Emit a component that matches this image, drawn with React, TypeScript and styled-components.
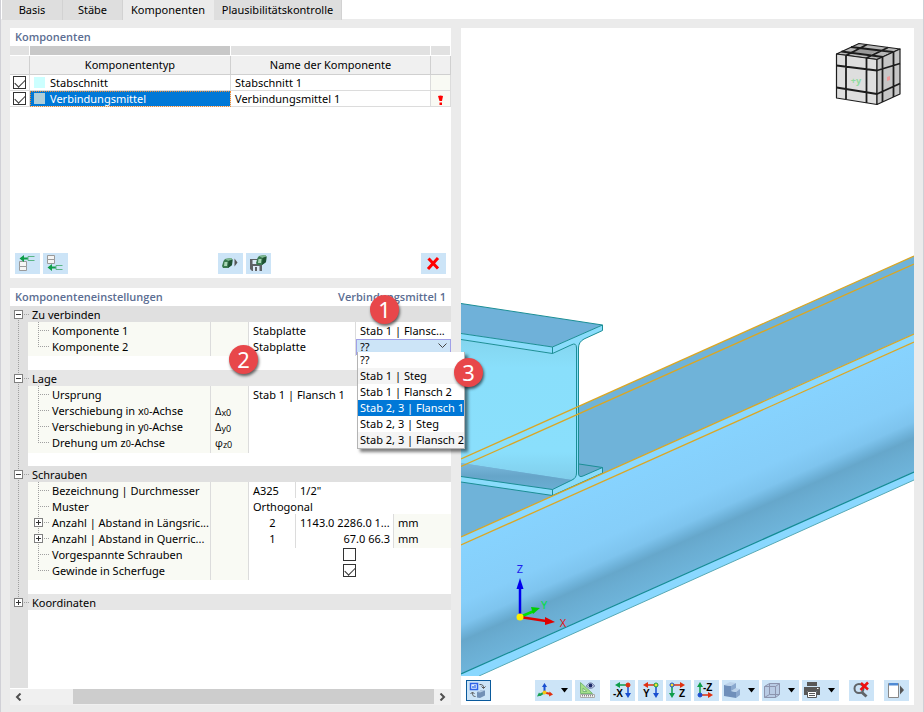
import React, { useState } from "react";
import styled, { createGlobalStyle } from "styled-components";

const GlobalStyle = createGlobalStyle`
  * { box-sizing: border-box; }
  body { margin: 0; background: #ebebeb; }
  body, button, select, input {
    font-family: "Noto Sans", "Open Sans", sans-serif;
    font-size: 11px;
    line-height: 16px;
    color: #000;
  }
`;

const dotsDown = "repeating-linear-gradient(180deg, #a0a0a0 0 1px, transparent 1px 2px)";
const dotsAcross = "repeating-linear-gradient(90deg, #a0a0a0 0 1px, transparent 1px 2px)";

const Window = styled.div`
  min-height: 100vh;
  display: flex;
  flex-direction: column;
  border-left: 1px solid #d0d0d6;
  border-right: 1px solid #d0d0d6;
  background: #ebebeb;
`;

const TabStrip = styled.nav`
  display: flex;
  height: 19px;
  background: #fff;
  padding-left: 1px;
`;

const Tab = styled.button<{ $active?: boolean; $wide: number }>`
  flex: 0 0 ${(p) => p.$wide}px;
  height: 20px;
  padding: 0;
  border: 0;
  border-right: 1px solid ${(p) => (p.$active ? "#ebebeb" : "#d2d2d2")};
  background: ${(p) => (p.$active ? "#ebebeb" : "#dedede")};
  white-space: nowrap;
`;

const Workspace = styled.main`
  flex: 1;
  display: grid;
  grid-template-columns: minmax(0, 441px) minmax(0, 1fr);
  grid-template-rows: minmax(250px, auto) 1fr;
  gap: 10px;
  padding: 9px 9px 7px;
`;

const Panel = styled.section`
  position: relative;
  display: flex;
  flex-direction: column;
  background: #fff;
`;

const PanelHead = styled.header`
  display: flex;
  justify-content: space-between;
  height: 18px;
  padding: 1px 5px;
`;

const PanelTitle = styled.h2`
  margin: 0;
  font-family: "Open Sans", sans-serif;
  font-size: 11px;
  line-height: 16px;
  font-weight: 600;
  color: #5b6d92;
`;

const Grid = styled.table`
  width: 100%;
  table-layout: fixed;
  border-collapse: separate;
  border-spacing: 0;
`;

const StripCell = styled.td<{ $dark?: boolean }>`
  height: 10px;
  padding: 0;
  background: ${(p) => (p.$dark ? "#c8c8c8" : "#e1e1e1")};
  border-right: 1px solid #fff;
  border-bottom: 1px solid #fff;
`;

const HeadCell = styled.th`
  height: 19px;
  padding: 0;
  font-weight: 400;
  background: #f0f0f0;
  border-right: 1px solid #d0d0d0;
  border-bottom: 1px solid #d0d0d0;
`;

const Cell = styled.td<{ $selected?: boolean; $pale?: boolean }>`
  height: 16px;
  padding: 0 0 0 4px;
  line-height: 15px;
  white-space: nowrap;
  background: ${(p) => (p.$selected ? "#0078d7" : p.$pale ? "#f9faf4" : "#fff")};
  color: ${(p) => (p.$selected ? "#fff" : "#000")};
  outline: ${(p) => (p.$selected ? "1px dotted #f08a30" : "none")};
  outline-offset: -1px;
  border-right: 1px solid #dcdcdc;
  border-bottom: 1px solid #dcdcdc;
`;

const CheckCell = styled(Cell)`
  padding: 0 0 0 3px;
`;

const Swatched = styled.span`
  display: flex;
  align-items: center;
  gap: 5px;
`;

const Swatch = styled.span<{ $tone: string }>`
  width: 11px;
  height: 11px;
  background: ${(p) => p.$tone};
`;

const Tick = styled.input.attrs({ type: "checkbox" })`
  appearance: none;
  display: block;
  width: 13px;
  height: 13px;
  margin: 0;
  border: 1px solid #333;
  background: #fff;
  &:checked::before {
    content: "";
    display: block;
    width: 9px;
    height: 5px;
    margin: 2px 0 0 1px;
    border-left: 1px solid #333;
    border-bottom: 1px solid #333;
    transform: rotate(-45deg);
  }
`;

const Tools = styled.div`
  margin-top: auto;
  padding: 4px 5px;
  display: flex;
  justify-content: space-between;
`;

const ToolGroup = styled.div`
  display: flex;
  gap: 3px;
`;

const Tool = styled.button<{ $drop?: boolean; $framed?: boolean }>`
  flex: 0 0 auto;
  display: flex;
  align-items: center;
  width: ${(p) => (p.$drop ? 37 : 25)}px;
  height: 21px;
  padding: 0;
  border: 0;
  background: #cce4f7;
  box-shadow: ${(p) => (p.$framed ? "inset 0 0 0 1px #0a5a9c" : "none")};
  svg { display: block; flex: 0 0 auto; }
`;

const Tree = styled.div`
  flex: 1;
  display: flex;
  flex-direction: column;
  line-height: 18px;
`;

const GroupRow = styled.div<{ $light?: boolean }>`
  display: flex;
  height: 16px;
  background: ${(p) => (p.$light ? "#e6e6e6" : "#e0e0e0")};
`;

const Gutter = styled.span<{ $line?: "full" | "top" | "bottom" | "none" }>`
  flex: 0 0 18px;
  display: flex;
  padding: 4px 0 0 4px;
  background-color: #e0e0e0;
  background-image: ${(p) => (p.$line === "none" ? "none" : dotsDown)};
  background-size: 1px ${(p) => (p.$line === "full" ? "100%" : "50%")};
  background-position: 8px ${(p) => (p.$line === "bottom" ? "100%" : "0")};
  background-repeat: no-repeat;
`;

const GroupStub = styled.span`
  flex: 0 0 5px;
  margin-left: -4px;
  background: ${dotsAcross} 0 8px / 5px 1px no-repeat;
`;

const GroupName = styled.span`
  padding-left: 3px;
`;

const Expander = styled.button<{ $open?: boolean }>`
  width: 9px;
  height: 9px;
  padding: 0;
  border: 1px solid #808080;
  background:
    linear-gradient(#333, #333) 1px 3px / 5px 1px no-repeat,
    linear-gradient(#333, #333) 3px 1px / 1px ${(p) => (p.$open ? 0 : 5)}px no-repeat,
    #fff;
`;

const Row = styled.div`
  display: grid;
  grid-template-columns: 18px 183px 38px minmax(0, 1fr);
  height: 16px;
`;

const NameCell = styled.div`
  display: flex;
  background: #f9faf4;
  border-right: 1px solid #dcdcdc;
  white-space: nowrap;
`;

const Branch = styled.span<{ $last?: boolean }>`
  flex: 0 0 24px;
  display: flex;
  padding: 4px 0 0 6px;
  background-image: ${dotsDown}, ${dotsAcross};
  background-size: 1px ${(p) => (p.$last ? "50%" : "100%")}, 12px 1px;
  background-position: 10px 0, 10px 8px;
  background-repeat: no-repeat;
`;

const SymbolCell = styled.div`
  padding-left: 4px;
  background: #f9faf4;
  border-right: 1px solid #dcdcdc;
  font-family: "Open Sans", sans-serif;
`;

const Small = styled.sub`
  font-size: 9px;
  line-height: 9px;
  vertical-align: -1px;
`;

const Zero = styled.span`
  font-size: 9px;
`;

const Values = styled.div<{ $split?: "half" | "pair" | "unit" | "tick" }>`
  display: grid;
  grid-template-columns: ${(p) =>
    p.$split === "half" ? "107px minmax(0, 1fr)"
      : p.$split === "pair" ? "47px minmax(0, 1fr)"
        : p.$split === "unit" ? "47px 98px minmax(0, 1fr)" : "minmax(0, 1fr)"};
  ${(p) => (p.$split === "tick" ? "justify-items: center; align-items: center; padding: 0 1px 1px 0;" : "")}
`;

const Value = styled.div<{ $line?: boolean; $pale?: boolean; $align?: string }>`
  position: relative;
  padding: 0 3px 0 4px;
  text-align: ${(p) => p.$align || "left"};
  background: ${(p) => (p.$pale ? "#f9faf4" : "#fff")};
  border-right: ${(p) => (p.$line ? "1px solid #dcdcdc" : "0")};
  white-space: nowrap;
`;

const Spacer = styled.div<{ $grow?: boolean }>`
  display: flex;
  flex: ${(p) => (p.$grow ? "1 0 16px" : "0 0 16px")};
`;

const Combo = styled.div`
  position: relative;
  display: flex;
  align-items: center;
  line-height: 16px;
`;

const ComboSelect = styled.select`
  appearance: none;
  width: 100%;
  height: 16px;
  padding: 0 3px;
  line-height: 14px;
  border: 1px solid #a0a0e8;
  border-radius: 0;
  background: #cce4f7;
`;

const ComboArrow = styled.svg`
  position: absolute;
  right: 4px;
  top: 5px;
  pointer-events: none;
`;

const Options = styled.ul`
  position: absolute;
  z-index: 2;
  top: 14px;
  left: 1px;
  width: 108px;
  margin: 0;
  padding: 0;
  list-style: none;
  border: 1px solid #b4b4b4;
  border-top: 0;
  background: #fff;
  box-shadow: 3px 3px 3px rgba(0, 0, 0, 0.5);
`;

const Option = styled.li<{ $shade?: boolean; $picked?: boolean }>`
  height: 16px;
  padding-left: 2px;
  white-space: nowrap;
  background: ${(p) => (p.$picked ? "#0078d7" : p.$shade ? "#f4f4f4" : "#fff")};
  color: ${(p) => (p.$picked ? "#fff" : "#000")};
`;

const ScrollBar = styled.div`
  display: grid;
  grid-template-columns: 17px 1fr 17px;
  height: 16px;
  margin-top: 1px;
  background: #f0f0f0;
`;

const ScrollArrow = styled.button`
  display: flex;
  align-items: center;
  justify-content: center;
  padding: 0;
  border: 0;
  background: #f0f0f0;
`;

const ScrollThumb = styled.div`
  margin: 0 0 1px 46px;
  background: #cdcdcd;
`;

const Marker = styled.span<{ $x: number; $y: number }>`
  position: absolute;
  z-index: 3;
  left: ${(p) => p.$x}px;
  top: ${(p) => p.$y}px;
  width: 29px;
  height: 29px;
  border-radius: 50%;
  background: #e8474a;
  box-shadow: 1px 2px 3px rgba(0, 0, 0, 0.6);
  color: #fff;
  font-size: 22px;
  line-height: 28px;
  text-align: center;
`;

const Viewer = styled.section`
  grid-column: 2;
  grid-row: 1 / 3;
  display: flex;
  flex-direction: column;
  background: #fff;
`;

const SceneBox = styled.div`
  flex: 1;
  display: flex;
  min-height: 0;
`;

const SceneSvg = styled.svg`
  flex: 1;
  width: 100%;
  font-family: "Noto Sans", sans-serif;
`;

const ViewBar = styled.div`
  display: flex;
  gap: 3px;
  padding: 4px 5px;
  svg text { font: 700 10px "Liberation Sans", sans-serif; }
`;

const Gap = styled.span<{ $size?: number }>`
  flex: ${(p) => (p.$size ? `0 0 ${p.$size}px` : "1 1 0")};
`;

const Icon = ({ children, w = 25 }: { children: React.ReactNode; w?: number }) => (
  <svg width={w} height="21" viewBox={`0 0 ${w} 21`} aria-hidden="true">
    {children}
    {w > 25 && <path d="M26 8h7l-3.500 4.500z" fill="#000" />}
  </svg>
);

const InsertAbove = () => (
  <Icon>
    <path d="M4.500 8.500h7v5h-7zM4.500 13.500h7v4h-7z" fill="#f5f5f5" stroke="#9a9a9a" />
    <path d="M4.500 5.500l4.500-3.500v2.500h4v2h-4v2.500z" fill="#0f9d4a" />
    <path d="M19.500 3.500h-6.500v4h6.500" fill="none" stroke="#5ab585" />
  </Icon>
);
const InsertBelow = () => (
  <Icon>
    <path d="M4.500 2.500h7v4h-7zM4.500 6.500h7v4h-7z" fill="#f5f5f5" stroke="#9a9a9a" />
    <path d="M4.500 14.500l4.500-3.500v2.500h4v2h-4v2.500z" fill="#0f9d4a" />
    <path d="M19.500 12.500h-6.500v4h6.500" fill="none" stroke="#5ab585" />
  </Icon>
);
const Nut = ({ x, y }: { x: number; y: number }) => (
  <g transform={`translate(${x} ${y})`}>
    <path d="M3 1l6-1 1.500 1.500L10 7l-4 3-5 0L0 8l1.500-5z" fill="#3a7a50" />
    <path d="M3 1l6-1 1.500 1.500-4 1.500z" fill="#7fb892" />
    <path d="M6.500 3l4-1.500L10 7 6 10z" fill="#1f5233" />
    <path d="M2.500 4h3L5 8H2z" fill="#a9d6b6" />
  </g>
);
const Library = () => (
  <Icon>
    <Nut x={4} y={5} />
    <path d="M16.500 5.500l3 4-3 4z" fill="#555" />
  </Icon>
);
const SaveLibrary = () => (
  <Icon>
    <path d="M4 6h11l1 2v10H6l-2-2z" fill="#5d6165" />
    <path d="M6.500 7h6v4h-6zM7 13h6.500v5H7z" fill="#dbeaf7" />
    <path d="M9 14h2v4H9z" fill="#5d6165" />
    <Nut x={10} y={2} />
  </Icon>
);
const Remove = () => (
  <Icon>
    <path d="M7.500 5.500l9.500 10M17 5L7 16" stroke="#f00" strokeWidth="3" />
  </Icon>
);

const SwapView = () => (
  <Icon>
    <path d="M4.500 3.500h7v6h-7z" fill="#e6f0ff" stroke="#2d62e8" strokeWidth="1.500" />
    <path d="M6 8V6h2V5h2v3z" fill="#6f9bf0" />
    <path d="M13.500 4.500c3 0 4 .5 4 3.500m-2-1.500l2 2 2-2M9.500 16.500c-3 0-3-2-3-4m-2 1.500l2-2 2 2" fill="none" stroke="#555" />
    <path d="M11 12l5-2 3 .500v5L14 18l-3-.5z" fill="#7290b6" />
    <path d="M11 12l5-2 3 .500-5 2z" fill="#b4cce6" />
  </Icon>
);
const Axes = () => (
  <Icon w={37}>
    <path d="M9.500 12V6" stroke="#1a4fd0" strokeWidth="2" /><path d="M7 7l2.500-4L12 7z" fill="#1a4fd0" />
    <path d="M9.500 12.500l-5 2.500" stroke="#18a050" strokeWidth="2" /><path d="M2 16.500l2-4 2.500 3z" fill="#18a050" />
    <path d="M9.500 12.500l6 1.500" stroke="#e03010" strokeWidth="2" /><path d="M14 16.500l.5-5 3.500 3z" fill="#e03010" />
    <circle cx="9.500" cy="12.500" r="2" fill="#f5c518" />
  </Icon>
);
const Measure = () => (
  <Icon>
    <path d="M5.500 2.500v11h12z" fill="#a5e08a" stroke="#7ab878" />
    <path d="M8 8v3.500h4z" fill="#e0f5d8" stroke="#7ab878" />
    <path d="M5.500 14.500h14v3h-14z" fill="#f4f4f4" stroke="#aaa" />
    <path d="M7.500 15v1.500m2-1.500v1.500m2-1.500v1.500m2-1.500v1.500m2-1.500v1.500m2-1.500v1.500" stroke="#888" />
    <path d="M11.500 6c2-4 6-4 8 0-2 3-6 3-8 0z" fill="#dce6f8" stroke="#5b6a98" />
    <circle cx="15.500" cy="5.500" r="2" fill="#1f2d68" />
  </Icon>
);
type AxisProps = { label: string; tx: number; ty: number; cx: number; cy: number; h: string; v: string; left?: boolean; up?: boolean; dot: string; ring: string };
const AxisView = ({ label, tx, ty, cx, cy, h, v, left, up, dot, ring }: AxisProps) => {
  const dx = left ? -1 : 1;
  const dy = up ? -1 : 1;
  return (
    <Icon>
      <path d={`M${cx} ${cy}h${dx * 9}`} stroke={h} strokeWidth="1.500" />
      <path d={`M${cx + dx * 13} ${cy}l${-dx * 5} -3v6z`} fill={h} />
      <path d={`M${cx} ${cy}v${dy * 9}`} stroke={v} strokeWidth="1.500" />
      <path d={`M${cx} ${cy + dy * 13}l-3 ${-dy * 5}h6z`} fill={v} />
      <circle cx={cx} cy={cy} r="2" fill={dot} stroke={ring} />
      <text x={tx} y={ty}>{label}</text>
    </Icon>
  );
};
const Solid = () => (
  <Icon w={37}>
    <path d="M2 5l7 1v5l5 1v6L2 16z" fill="#6f8fba" />
    <path d="M2 5l6-3 6 1-5 3zM9 11l5-3 4 1-4 3z" fill="#bcd2ea" />
    <path d="M9 6l5-3v5l-5 3zM14 12l4-3v6l-4 3z" fill="#8aa8ce" />
  </Icon>
);
const Wire = () => (
  <Icon w={37}>
    <path d="M2.500 6.500l5-3h10v11l-4 3h-11z" fill="#b9cbe4" />
    <path d="M2.500 6.500h11v11h-11zM2.500 6.500l5-3h10l-4 3M17.500 3.500v11l-4 3M7.500 3.500v11h10M7.500 14.500l-5 3" fill="none" stroke="#8c94ae" />
  </Icon>
);
const Printer = () => (
  <Icon w={37}>
    <path d="M5 2h10v4H5zM2 7h16v8h-3v-4H5v4H2z" fill="#585858" />
    <path d="M5.500 11.500h9v6h-9z" fill="#fff" stroke="#585858" />
    <path d="M7 13.500h6m-6 2h6" stroke="#585858" />
    <path d="M15 8.500h1.500" stroke="#fff" />
  </Icon>
);
const ClearSearch = () => (
  <Icon>
    <circle cx="10" cy="8.500" r="4.500" fill="none" stroke="#606468" strokeWidth="2" />
    <path d="M12.500 12l5 4.500" stroke="#606468" strokeWidth="3" />
    <path d="M12 3l7 6.500M19 2.500L11.500 10" stroke="#ee1111" strokeWidth="2.500" />
  </Icon>
);
const Sidebar = () => (
  <Icon>
    <path d="M4.500 3.500h10v14h-10z" fill="#fff" stroke="#888" />
    <path d="M5 3h9v2.500H5z" fill="#4f8ad4" />
    <path d="M16 5.500l4 4.500-4 4.500z" fill="#555" />
  </Icon>
);

const Alert = () => (
  <svg width="9" height="10" viewBox="0 0 9 10" role="img" aria-label="Fehler">
    <path d="M2 1q2.500-1 5 0L6 6H3.500z" fill="#f00" />
    <path d="M3.500 7.500h2.500V10H3.500z" fill="#f00" />
  </svg>
);

const AlertCell = styled(Cell)`
  svg { display: block; margin: 3px 0 0 1px; }
`;

const Scene = () => (
  <SceneSvg viewBox="461 28 453 648" preserveAspectRatio="xMinYMax slice" role="img" aria-label="3D-Modell">
    <defs>
      <linearGradient id="web" gradientUnits="userSpaceOnUse" x1="461" y1="545" x2="509" y2="652">
        <stop offset="0" stopColor="#87d3fe" />
        <stop offset="0.450" stopColor="#86cef9" />
        <stop offset="0.620" stopColor="#7ec4ee" />
        <stop offset="0.700" stopColor="#6eb2d9" />
        <stop offset="0.750" stopColor="#66a7cb" />
        <stop offset="0.850" stopColor="#6aadd2" />
        <stop offset="1" stopColor="#6eb4da" />
      </linearGradient>
      <linearGradient id="joist" x1="0" y1="0" x2="0" y2="1">
        <stop offset="0" stopColor="#84d5ee" />
        <stop offset="0.200" stopColor="#89dffb" />
        <stop offset="0.800" stopColor="#8adffc" />
        <stop offset="1" stopColor="#80cdea" />
      </linearGradient>
      <linearGradient id="foot" x1="0" y1="0" x2="0" y2="1">
        <stop offset="0" stopColor="#79b8dc" />
        <stop offset="0.500" stopColor="#66a5c9" />
        <stop offset="1" stopColor="#6aaed3" />
      </linearGradient>
    </defs>

    <path d="M461 459L914 256V334L461 537z" fill="#6fb3d9" />
    <path d="M461 537L914 334V342L461 545z" fill="#8ad8ff" />
    <path d="M461 545L914 342V472L461 674z" fill="url(#web)" />
    <path d="M461 674L914 472V480L479 676H461z" fill="#8ad8ff" />
    <path d="M461 674L914 472" stroke="#138a93" strokeWidth="1.200" />
    <path d="M479 676L914 480" stroke="#57a9b5" />

    <path d="M461 303.500L602.500 325L552.500 347L461 333.500z" fill="#6fb1d9" />
    <path d="M461 339.500L552.500 353.500L570 345Q576 342 576.500 347V477L572 480L461 463z" fill="url(#joist)" />
    <path d="M461 463L572 480L552.500 489.500L461 476.500z" fill="url(#foot)" />
    <path d="M579 464L602.500 467.500L582 476.500Q579 478 579 474z" fill="#6aa9cb" />
    <g fill="#8adcfb" stroke="#1b8e95" strokeWidth="1">
      <path d="M461 333.500L552.500 347V353.500L461 339.500" />
      <path d="M461 476.500L552.500 489.500V495.500L461 482" />
      <path d="M552.500 347L602.500 325V330.500L584 339Q578.500 342 578.500 348V473Q578.500 478 583 476L602.500 467.500V473L552.500 495.500V489.500L572 480Q576.500 478 576.500 473V348Q576.500 342 571 345L552.500 353.500z" />
      <path d="M461 303.500L602.500 325M579 464L602.500 467.500" fill="none" />
    </g>

    <g stroke="#dba622" strokeWidth="1.300">
      <path d="M461 459L914 256" />
      <path d="M461 466.500L914 264" />
      <path d="M461 537L914 334" />
      <path d="M461 545L914 342" />
    </g>

    <g strokeWidth="2.500">
      <path d="M520 617L534 611" stroke="#00e000" /><path d="M531 607l9 1-7 6z" fill="#00d000" />
      <path d="M520 617L546 621" stroke="#e00000" /><path d="M545 617l10 5-10 3z" fill="#e00000" />
      <path d="M520 617V588" stroke="#0000ee" /><path d="M516.500 589l3.500-11 3.500 11z" fill="#0000ee" />
      <circle cx="520" cy="617" r="3.500" fill="#ffee00" />
    </g>
    <g fontSize="11" textAnchor="middle">
      <text x="520" y="573" fill="#2020ee">Z</text>
      <text x="544" y="609" fill="#00e040">Y</text>
      <text x="563" y="627" fill="#e01010">X</text>
    </g>

    <g stroke="#1c1c1c" strokeWidth="1.200" strokeLinejoin="round">
      <path d="M836.500 54L859 43.500L900 49L877 59.500z" fill="#b8b8b8" />
      <path d="M836.500 54L877 59.500V104.500L836.500 98z" fill="#dedede" />
      <path d="M877 59.500L900 49V94L877 104.500z" fill="#c6c6c6" />
      <path d="M854 52L862 48L879 50.500L870 54.500z" fill="#999" stroke="none" />
      <path d="M846 55.500V99M866.500 58V103M836.500 65.500L877 70.500L900 63.500M836.500 87.500L877 94L900 83.500M882.500 57V102M893.500 52V97" fill="none" strokeWidth="1.800" />
      <path d="M846 55.500L867 44.500M866.500 58L888 47.500M841.500 51.500L883 57M851 47L893 52" fill="none" strokeWidth="1.800" />
    </g>
    <text x="856" y="84" fontSize="9" fontWeight="700" fill="#90dca0" textAnchor="middle">+y</text>
    <path d="M887 77l3-1v4l-3 1z" fill="#ee9a9a" />
  </SceneSvg>
);

const connectChoices = ["??", "Stab 1 | Steg", "Stab 1 | Flansch 2", "Stab 2, 3 | Flansch 1", "Stab 2, 3 | Steg", "Stab 2, 3 | Flansch 2"];

type PropertyProps = {
  name: React.ReactNode;
  symbol?: React.ReactNode;
  last?: boolean;
  expandable?: boolean;
  split?: "half" | "pair" | "unit" | "tick";
  children?: React.ReactNode;
};
const Property = ({ name, symbol, last, expandable, split, children }: PropertyProps) => (
  <Row>
    <Gutter $line="full" />
    <NameCell>
      <Branch $last={last}>{expandable && <Expander aria-label="Aufklappen" />}</Branch>
      <span>{name}</span>
    </NameCell>
    <SymbolCell>{symbol}</SymbolCell>
    <Values $split={split}>{children}</Values>
  </Row>
);

const Group = ({ name, light, closed, line }: { name: string; light?: boolean; closed?: boolean; line: "full" | "top" | "bottom" }) => (
  <GroupRow $light={light}>
    <Gutter $line={line}><Expander $open={!closed} aria-label={name} /></Gutter>
    <GroupStub />
    <GroupName>{name}</GroupName>
  </GroupRow>
);

export default function App() {
  const [choice, setChoice] = useState("??");
  return (
    <>
      <GlobalStyle />
      <Window>
        <TabStrip>
          <Tab $wide={61}>Basis</Tab>
          <Tab $wide={60}>Stäbe</Tab>
          <Tab $wide={91} $active>Komponenten</Tab>
          <Tab $wide={128}>Plausibilitätskontrolle</Tab>
        </TabStrip>
        <Workspace>
          <Panel>
            <PanelHead><PanelTitle>Komponenten</PanelTitle></PanelHead>
            <Grid>
              <colgroup>
                <col width="20" /><col width="201" /><col /><col width="20" />
              </colgroup>
              <thead>
                <tr><StripCell /><StripCell $dark /><StripCell /><StripCell /></tr>
                <tr>
                  <HeadCell />
                  <HeadCell>Komponententyp</HeadCell>
                  <HeadCell>Name der Komponente</HeadCell>
                  <HeadCell />
                </tr>
              </thead>
              <tbody>
                <tr>
                  <CheckCell><Tick defaultChecked aria-label="Stabschnitt 1" /></CheckCell>
                  <Cell><Swatched><Swatch $tone="#ccffff" />Stabschnitt</Swatched></Cell>
                  <Cell>Stabschnitt 1</Cell>
                  <Cell $pale />
                </tr>
                <tr>
                  <CheckCell><Tick defaultChecked aria-label="Verbindungsmittel 1" /></CheckCell>
                  <Cell $selected><Swatched><Swatch $tone="#b0ced9" />Verbindungsmittel</Swatched></Cell>
                  <Cell>Verbindungsmittel 1</Cell>
                  <AlertCell $pale><Alert /></AlertCell>
                </tr>
              </tbody>
            </Grid>
            <Tools>
              <ToolGroup>
                <Tool aria-label="Oben einfügen"><InsertAbove /></Tool>
                <Tool aria-label="Unten einfügen"><InsertBelow /></Tool>
              </ToolGroup>
              <ToolGroup>
                <Tool aria-label="Bibliothek"><Library /></Tool>
                <Tool aria-label="In Bibliothek speichern"><SaveLibrary /></Tool>
              </ToolGroup>
              <Tool aria-label="Löschen"><Remove /></Tool>
            </Tools>
          </Panel>

          <Panel>
            <PanelHead>
              <PanelTitle>Komponenteneinstellungen</PanelTitle>
              <PanelTitle>Verbindungsmittel 1</PanelTitle>
            </PanelHead>
            <Tree>
              <Group name="Zu verbinden" line="bottom" />
              <Property name="Komponente 1" split="half">
                <Value $line>Stabplatte</Value>
                <Value>Stab 1 | Flansc...</Value>
              </Property>
              <Property name="Komponente 2" split="half" last>
                <Value $line>Stabplatte</Value>
                <Combo>
                  <ComboSelect aria-label="Komponente 2" value={choice} onChange={(e) => setChoice(e.target.value)}>
                    {connectChoices.map((c) => <option key={c}>{c}</option>)}
                  </ComboSelect>
                  <ComboArrow width="9" height="6" viewBox="0 0 9 6" aria-hidden="true">
                    <path d="M.5.500l4 4 4-4" fill="none" stroke="#444" />
                  </ComboArrow>
                  <Options role="listbox">
                    {connectChoices.map((c, i) => (
                      <Option key={c} role="option" $shade={i % 4 === 1} $picked={i === 3} aria-selected={i === 3} onClick={() => setChoice(c)}>{c}</Option>
                    ))}
                  </Options>
                </Combo>
              </Property>
              <Spacer><Gutter $line="full" /></Spacer>
              <Group name="Lage" line="full" light />
              <Property name="Ursprung"><Value>Stab 1 | Flansch 1</Value></Property>
              <Property name={<>Verschiebung in x<Zero>0</Zero>-Achse</>} symbol={<>Δ<Small>x0</Small></>} />
              <Property name={<>Verschiebung in y<Zero>0</Zero>-Achse</>} symbol={<>Δ<Small>y0</Small></>} />
              <Property name={<>Drehung um z<Zero>0</Zero>-Achse</>} symbol={<>φ<Small>z0</Small></>} last />
              <Spacer><Gutter $line="full" /></Spacer>
              <Group name="Schrauben" line="full" />
              <Property name="Bezeichnung | Durchmesser" split="pair">
                <Value $line>A325</Value>
                <Value>1/2"</Value>
              </Property>
              <Property name="Muster"><Value>Orthogonal</Value></Property>
              <Property name="Anzahl | Abstand in Längsric..." split="unit" expandable>
                <Value $line $align="center">2</Value>
                <Value $line>1143.0 2286.0 1...</Value>
                <Value $pale>mm</Value>
              </Property>
              <Property name="Anzahl | Abstand in Querric..." split="unit" expandable>
                <Value $line $align="center">1</Value>
                <Value $line $align="right">67.0 66.3</Value>
                <Value $pale>mm</Value>
              </Property>
              <Property name="Vorgespannte Schrauben" split="tick"><Tick aria-label="Vorgespannte Schrauben" /></Property>
              <Property name="Gewinde in Scherfuge" split="tick" last><Tick defaultChecked aria-label="Gewinde in Scherfuge" /></Property>
              <Spacer><Gutter $line="full" /></Spacer>
              <Group name="Koordinaten" line="top" light closed />
              <Spacer $grow><Gutter $line="none" /></Spacer>
            </Tree>
            <ScrollBar>
              <ScrollArrow aria-label="Nach links">
                <svg width="7" height="8" viewBox="0 0 7 8"><path d="M5.500.500L2 4l3.500 3.500" fill="none" stroke="#505050" strokeWidth="2" /></svg>
              </ScrollArrow>
              <ScrollThumb />
              <ScrollArrow aria-label="Nach rechts">
                <svg width="7" height="8" viewBox="0 0 7 8"><path d="M1.500.500L5 4 1.500 7.500" fill="none" stroke="#505050" strokeWidth="2" /></svg>
              </ScrollArrow>
            </ScrollBar>
            <Marker $x={360} $y={7}>1</Marker>
            <Marker $x={219} $y={57}>2</Marker>
            <Marker $x={444} $y={70}>3</Marker>
          </Panel>

          <Viewer>
            <SceneBox><Scene /></SceneBox>
            <ViewBar>
              <Tool $framed aria-label="Ansicht wechseln"><SwapView /></Tool>
              <Gap />
              <Tool $drop aria-label="Achsen"><Axes /></Tool>
              <Tool aria-label="Messen"><Measure /></Tool>
              <Gap $size={4} />
              <Tool aria-label="Ansicht -X"><AxisView label="-X" tx={3} ty={17} cx={18} cy={5} h="#0f9d4a" v="#1a4fd0" left dot="#e03010" ring="#e03010" /></Tool>
              <Tool aria-label="Ansicht Y"><AxisView label="Y" tx={5} ty={17} cx={18} cy={5} h="#e03010" v="#1a4fd0" left dot="#f5e030" ring="#0f9d4a" /></Tool>
              <Tool aria-label="Ansicht Z"><AxisView label="Z" tx={13} ty={17} cx={6} cy={5} h="#e03010" v="#0f9d4a" dot="#f5e030" ring="#1a4fd0" /></Tool>
              <Tool aria-label="Ansicht -Z"><AxisView label="-Z" tx={9} ty={11} cx={6} cy={15} h="#e03010" v="#0f9d4a" up dot="#1a4fd0" ring="#1a4fd0" /></Tool>
              <Tool $drop aria-label="Darstellung"><Solid /></Tool>
              <Tool $drop aria-label="Drahtmodell"><Wire /></Tool>
              <Tool $drop aria-label="Drucken"><Printer /></Tool>
              <Gap $size={4} />
              <Tool aria-label="Suche löschen"><ClearSearch /></Tool>
              <Gap $size={4} />
              <Tool aria-label="Seitenleiste"><Sidebar /></Tool>
            </ViewBar>
          </Viewer>
        </Workspace>
      </Window>
    </>
  );
}
